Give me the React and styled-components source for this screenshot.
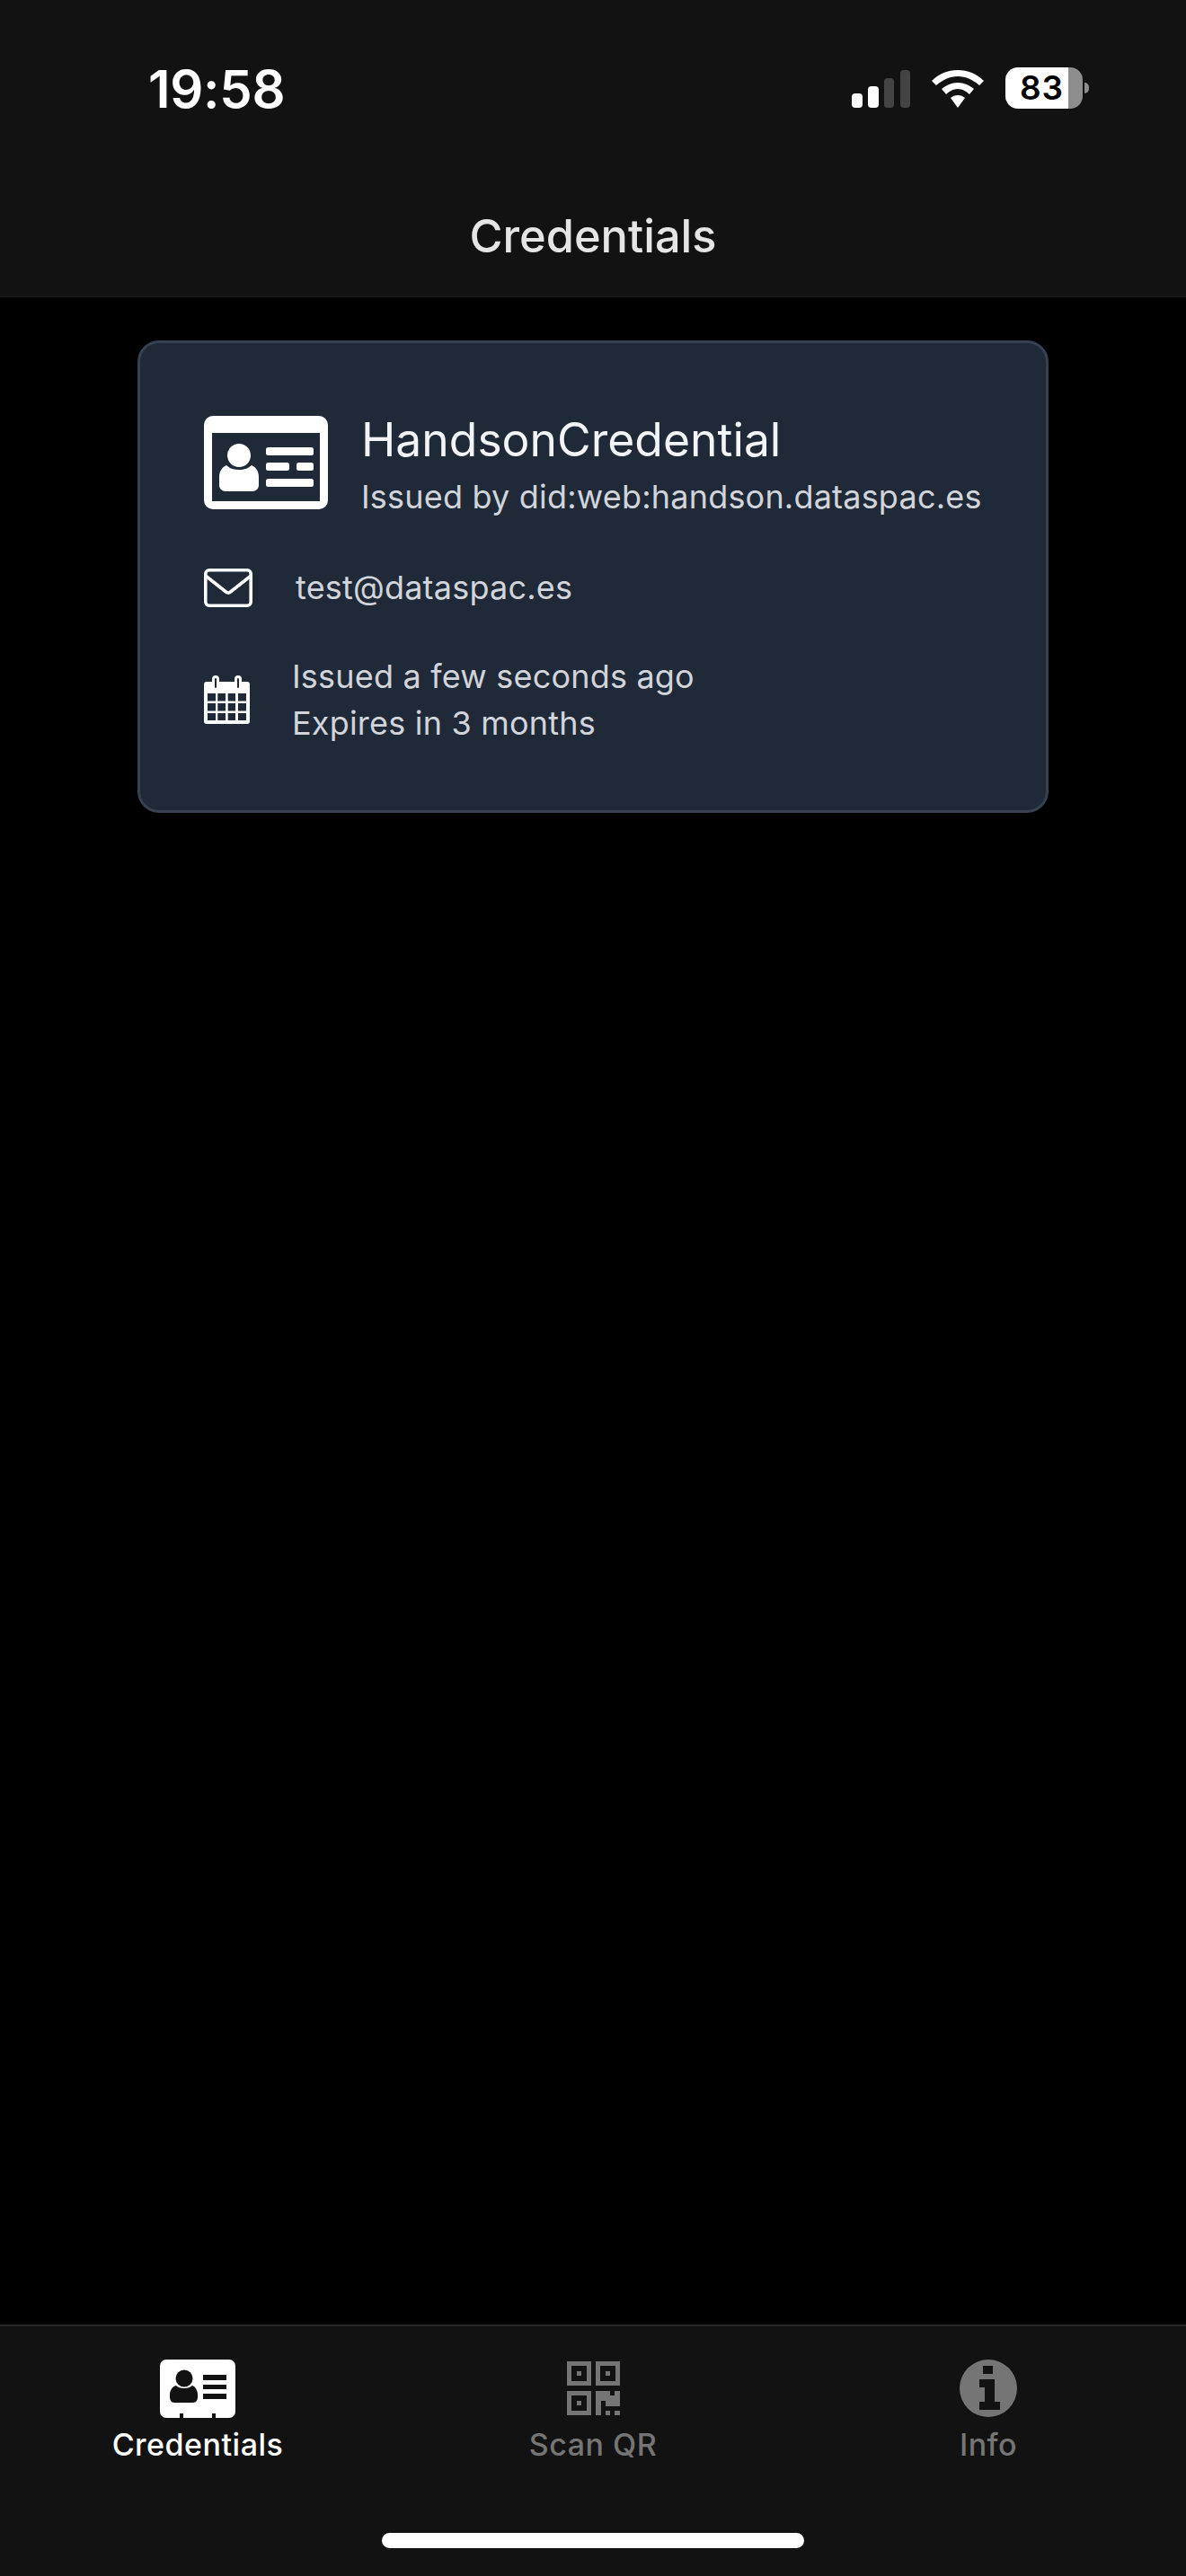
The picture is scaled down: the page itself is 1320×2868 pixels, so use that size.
import React from "react";
import styled, { createGlobalStyle } from "styled-components";

const Global = createGlobalStyle`
  html, body { margin: 0; padding: 0; background: #000; }
  * { box-sizing: border-box; }
  body { font-family: Inter, "Liberation Sans", sans-serif; }
`;
const Page = styled.div`
  width: 1320px; height: 2868px; display: flex; flex-direction: column; background: #000; color: #fff;
`;
const Header = styled.header`
  height: 331px; background: #121212; border-bottom: 2px solid #161616; display: flex; flex-direction: column; flex: none;
`;
const StatusBar = styled.div`
  height: 231px; padding: 64px 108px 0 165px; display: flex; justify-content: space-between; align-items: flex-start; flex: none;
`;
const Time = styled.div`
  font-size: 58px; line-height: 70px; font-weight: 600; letter-spacing: -0.3px; color: #fff;
`;
const StatusIcons = styled.div`
  display: flex; align-items: center; margin-top: 11px; height: 46px;
`;
const Signal = styled.svg`
  width: 65px; height: 42px; display: block; margin-top: 2px;
`;
const Wifi = styled.svg`
  width: 58px; height: 42px; display: block; margin: 2px 0 0 24px;
`;
const Battery = styled.div`
  width: 86px; height: 46px; margin-left: 24px; border-radius: 14px; overflow: hidden;
  background: linear-gradient(to right, #fff 0 70px, #8e8e8e 70px 86px);
  color: #000; font-size: 37px; font-weight: 600; line-height: 46px; text-align: center; padding-right: 5px; letter-spacing: 1px;
`;
const BatteryWrap = styled.div`
  display: flex; align-items: center;
`;
const BatteryCap = styled.div`
  width: 5px; height: 12px; margin-left: 2px; background: #8e8e8e; border-radius: 0 6px 6px 0;
`;
const Title = styled.h1`
  margin: 0; text-align: center; font-size: 50.5px; line-height: 64px; font-weight: 500; color: #e5e5e5;
`;
const Main = styled.main`
  flex: 1; padding: 48px 153px 0 153px; background: #000;
`;
const Card = styled.section`
  height: 526px; background: #1f2937; border: 3px solid #374151; border-radius: 24px; padding: 81px 71px 0;
  display: flex; flex-direction: column;
`;
const Top = styled.div`
  display: flex; align-items: flex-start; gap: 37px;
`;
const Heads = styled.div`
  display: flex; flex-direction: column; margin-top: -6px; white-space: nowrap;
`;
const Name = styled.div`
  font-size: 51.6px; line-height: 64px; font-weight: 400; color: #f3f4f6;
`;
const Sub = styled.div`
  font-size: 36px; line-height: 46px; margin-top: 9px; color: #d1d5db; letter-spacing: 0.2px;
`;
const Row = styled.div`
  display: flex; align-items: center; gap: ${p => p.$gap}px; margin-top: ${p => p.$top}px;
`;
const RowText = styled.div`
  font-size: 36px; line-height: 52px; color: #d1d5db; letter-spacing: 0.2px; white-space: nowrap;
`;
const Nav = styled.nav`
  height: 280px; flex: none; background: #121212; border-top: 2px solid #262626; position: relative;
  display: grid; grid-template-columns: 1fr 1fr 1fr; padding: 36px 0 0;
`;
const Tab = styled.div`
  display: flex; flex-direction: column; align-items: center; color: ${p => p.$on ? "#fff" : "#757575"};
`;
const IconSlot = styled.div`
  height: 66px; display: flex; align-items: center; justify-content: center;
`;
const TabLabel = styled.div`
  font-size: 34px; line-height: 44px; font-weight: 500; margin-top: 8px; letter-spacing: 0.5px;
`;
const HomeBar = styled.div`
  position: absolute; left: 425px; top: 230px; width: 470px; height: 17px; background: #fff; border-radius: 9px;
`;

const IdCard = () => (
  <svg width="138" height="104" viewBox="0 0 138 104" fill="#fff" style={{ flex: "none" }}>
    <path fillRule="evenodd" d="M10 0h118a10 10 0 0 1 10 10v84a10 10 0 0 1-10 10H10A10 10 0 0 1 0 94V10A10 10 0 0 1 10 0zM9 19v76h120V19z" />
    <circle cx="39" cy="44" r="13" />
    <path d="M25 55c3 3 8 5 14 5s11-2 14-5c5 2 8 7 8 13v9c0 4-3 7-7 7H24c-4 0-7-3-7-7v-9c0-6 3-11 8-13z" />
    <rect x="69" y="35" width="53" height="9" rx="2.5" />
    <rect x="69" y="52" width="26" height="9" rx="2.5" />
    <rect x="103" y="52" width="19" height="9" rx="2.5" />
    <rect x="69" y="70" width="53" height="9" rx="2.5" />
  </svg>
);
const Mail = () => (
  <svg width="54" height="43" viewBox="0 0 54 43" fill="none" stroke="#fff" strokeWidth="3.6" style={{ flex: "none" }}>
    <rect x="1.8" y="1.8" width="50.4" height="39.4" rx="4" />
    <path d="M3 9l21.500 17a4 4 0 0 0 5 0L51 9" strokeLinecap="round" />
  </svg>
);
const Calendar = () => (
  <svg width="51" height="54" viewBox="0 0 51 54" style={{ flex: "none" }}>
    <path fill="#fff" d="M3 7h6V4a4 4 0 0 1 8 0v3h17V4a4 4 0 0 1 8 0v3h6a3 3 0 0 1 3 3v41a3 3 0 0 1-3 3H3a3 3 0 0 1-3-3V10a3 3 0 0 1 3-3z" />
    <path stroke="#1f2937" strokeWidth="2" fill="none" d="M13 4v9M38 4v9" strokeLinecap="round" />
    <path fill="#1f2937" d="M4 20h9v8.500H4zM15.300 20H24v8.500h-8.700zM26.700 20H35v8.500h-8.300zM38 20h9v8.500h-9zM4 31h9v8.500H4zM15.300 31H24v8.500h-8.700zM26.700 31H35v8.500h-8.300zM38 31h9v8.500h-9zM4 42h9v8H4zM15.300 42H24v8h-8.700zM26.700 42H35v8h-8.300zM38 42h9v8h-9z" />
  </svg>
);
const NavCard = () => (
  <svg width="84" height="65" viewBox="0 0 84 65" fill="#fff">
    <path d="M7 0h70a7 7 0 0 1 7 7v51a7 7 0 0 1-7 7H62v-5h-4v5H26v-5h-4v5H7a7 7 0 0 1-7-7V7a7 7 0 0 1 7-7z" />
    <circle cx="27" cy="21" r="9.500" fill="#121212" />
    <path fill="#121212" d="M18 29c2 2 5 3 9 3s7-1 9-3c3 1 6 5 6 10v3c0 3-2 6-5 6H16c-3 0-5-3-5-6v-3c0-5 3-9 7-10z" />
    <path fill="#121212" d="M48 17h26v6H48zM48 28h26v5H48zM48 38h26v6H48z" />
  </svg>
);
const Qr = () => (
  <svg width="59" height="60" viewBox="0 0 59 60" fill="#757575">
    <path fillRule="evenodd" d="M0 0h27v27H0zM5 5v17h17V5zM32 0h27v27H32zM37 5v17h17V5zM0 33h27v27H0zM5 38v17h17V38z" />
    <path d="M11 11h5v5h-5zM43 11h5v5h-5zM11 44h5v5h-5z" />
    <path d="M32 33h16v5h5v-5h6v17H43v-6h-5v16h-6zM43 55h5v5h-5zM53 55h6v5h-6z" />
  </svg>
);
const Info = () => (
  <svg width="64" height="64" viewBox="0 0 64 64">
    <circle cx="32" cy="32" r="32" fill="#757575" />
    <path fill="#121212" d="M26 7h11v9H26zM22 22h17v25h6v9H22v-9h6V31h-6z" />
  </svg>
);

export default function App() {
  return (
    <Page>
      <Global />
      <Header>
        <StatusBar>
          <Time>19:58</Time>
          <StatusIcons>
            <Signal viewBox="0 0 65 42">
              <rect x="0" y="26" width="12" height="16" rx="4" fill="#fff" />
              <rect x="18" y="18" width="12" height="24" rx="4" fill="#fff" />
              <rect x="36" y="9" width="11" height="33" rx="4" fill="#444" />
              <rect x="54" y="0" width="11" height="42" rx="4" fill="#444" />
            </Signal>
            <Wifi viewBox="0 0 58 42">
              <path fill="#fff" d="M29 0c11 0 21 4 29 12l-5 5C46 11 38 7 29 7S12 11 5 17l-5-5C8 4 18 0 29 0zM29 14c7 0 13 3 18 7l-5 6c-3-3-8-6-13-6s-10 3-13 6l-5-6c5-4 11-7 18-7zM29 28c3 0 6 1 8 3l-8 11-8-11c2-2 5-3 8-3z" />
            </Wifi>
            <BatteryWrap>
              <Battery>83</Battery>
              <BatteryCap />
            </BatteryWrap>
          </StatusIcons>
        </StatusBar>
        <Title>Credentials</Title>
      </Header>
      <Main>
        <Card>
          <Top>
            <IdCard />
            <Heads>
              <Name>HandsonCredential</Name>
              <Sub>Issued by did:web:handson.dataspac.es</Sub>
            </Heads>
          </Top>
          <Row $gap={48} $top={52}>
            <Mail />
            <RowText>test@dataspac.es</RowText>
          </Row>
          <Row $gap={47} $top={47}>
            <Calendar />
            <RowText>Issued a few seconds ago<br />Expires in 3 months</RowText>
          </Row>
        </Card>
      </Main>
      <Nav>
        <Tab $on>
          <IconSlot><NavCard /></IconSlot>
          <TabLabel>Credentials</TabLabel>
        </Tab>
        <Tab>
          <IconSlot><Qr /></IconSlot>
          <TabLabel>Scan QR</TabLabel>
        </Tab>
        <Tab>
          <IconSlot><Info /></IconSlot>
          <TabLabel>Info</TabLabel>
        </Tab>
        <HomeBar />
      </Nav>
    </Page>
  );
}
